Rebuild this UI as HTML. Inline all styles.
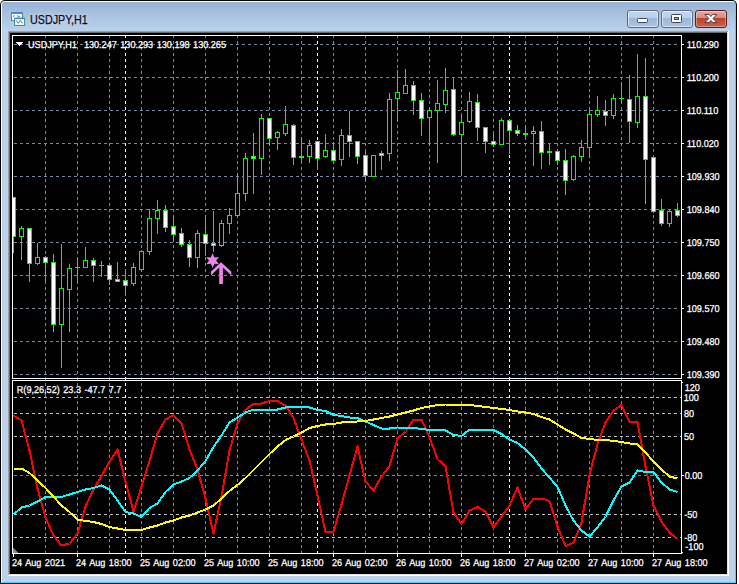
<!DOCTYPE html>
<html><head><meta charset="utf-8"><title>USDJPY,H1</title>
<style>
html,body{margin:0;padding:0;background:#fff;}
body{width:739px;height:584px;position:relative;overflow:hidden;font-family:"Liberation Sans",sans-serif;}
.abs{position:absolute;}
.t{position:absolute;height:20px;line-height:20px;font-size:9.1px;color:#fff;white-space:pre;word-spacing:1px;-webkit-text-stroke:0.25px #fff;text-rendering:geometricPrecision;transform-origin:0 13.1px;transform:scaleY(1.1);}
#w0{left:0;top:0;width:737px;height:584px;background:#000;border-radius:5px 5px 0 0;}
#w1{left:1px;top:1px;width:735px;height:582px;box-sizing:border-box;border-top:1px solid #fff;border-left:1px solid #fff;border-right:1px solid #3fd3ff;border-bottom:1px solid #3fd3ff;background:#bbd2ea;border-radius:4px 4px 0 0;}
#cap{left:2px;top:2px;width:733px;height:29px;background:linear-gradient(#98b4d4,#bbd3ec);border-radius:3px 3px 0 0;}
#title{left:30.1px;top:10px;height:20px;line-height:20px;font-size:12.5px;color:#0a0a28;white-space:pre;transform-origin:0 0;transform:scaleX(0.858);-webkit-text-stroke:0.25px #0a0a28;text-shadow:0 0 5px rgba(255,255,255,.7);}
.btn{top:10px;width:32px;height:18px;box-sizing:border-box;border:1px solid #5d6b86;border-radius:3px;background:linear-gradient(#c4d7ee 0,#b9cfe9 45%,#9cb9d9 46%,#a9c4e2 100%);box-shadow:inset 0 0 0 1px rgba(255,255,255,.55);}
#bclose{border-color:#5a1c22;background:linear-gradient(#e3ac9e 0,#d48b7b 45%,#bd4128 46%,#cb6248 100%);box-shadow:inset 0 0 0 1px rgba(255,255,255,.35);}
</style></head><body>
<div id="w0" class="abs"></div>
<div id="w1" class="abs"></div>
<div id="cap" class="abs"></div>
<!-- client sunken edge -->
<div class="abs" style="left:8px;top:31px;width:721px;height:545px;background:#fff;"></div>
<div class="abs" style="left:8px;top:31px;width:720px;height:544px;background:#a0a0a0;"></div>
<div class="abs" style="left:9px;top:32px;width:719px;height:543px;background:#e3e3e3;"></div>
<div class="abs" style="left:9px;top:32px;width:718px;height:542px;background:#696969;"></div>
<div class="abs" style="left:10px;top:33px;width:717px;height:541px;background:#000;"></div>
<!-- title icon -->
<svg class="abs" style="left:9px;top:10px" width="20" height="18" viewBox="9 10 20 18">
<rect x="11" y="12" width="12" height="9" rx="0.8" fill="#4a86ee"/>
<rect x="12" y="14" width="10" height="6" fill="#fffef6"/>
<path d="M13.2 16.6 L14.6 15.4 M17.2 15.4 L18.6 16.8 L20 16.8" stroke="#4a80f0" stroke-width="1.1" fill="none"/>
<path d="M11.5 12.5 H22.5 M11.5 12.5 V20.5 M22.5 12.5 V18" stroke="#3c8a6e" stroke-opacity=".75" stroke-dasharray="1 1" stroke-dashoffset="1" fill="none" shape-rendering="crispEdges"/>
<rect x="14" y="17.4" width="11.1" height="8.6" rx="0.8" fill="#4a86ee"/>
<rect x="15" y="19.2" width="9.1" height="5.7" fill="#fffef6"/>
<path d="M14.5 18.5 H24.5 M14.5 18.5 V25.5 M24.5 18.5 V25.5 M14.5 25.5 H24.5" stroke="#3c8a6e" stroke-opacity=".75" stroke-dasharray="1 1" stroke-dashoffset="1" fill="none" shape-rendering="crispEdges"/>
<path d="M16.2 20.3 L18.2 23.3 L20.1 20.3 L22.4 23.4" stroke="#4a80f0" stroke-width="1" fill="none"/>
</svg>
<div id="title" class="abs">USDJPY,H1</div>
<div class="abs btn" style="left:627px"></div>
<div class="abs btn" style="left:661px"></div>
<div id="bclose" class="abs btn" style="left:695px"></div>
<!-- button glyphs -->
<svg class="abs" style="left:627px;top:10px" width="100" height="18" viewBox="0 0 100 18">
<rect x="10.5" y="8.5" width="10" height="4" rx="1" fill="#fff" stroke="#3e4560"/>
<rect x="44.5" y="4.5" width="10" height="8" rx="1" fill="#fff" stroke="#3e4560"/>
<rect x="47.5" y="7.5" width="4" height="2" fill="#8fb0d8" stroke="#3e4560"/>
<path d="M77.9 4.4 h4.1 l1.9 2.1 l1.9 -2.1 h4.1 l-3.9 4.1 l3.9 4.1 h-4.1 l-1.9 -2.1 l-1.9 2.1 h-4.1 l3.9 -4.1 z" fill="#fff" stroke="#51394a" stroke-width="1" stroke-linejoin="round"/>
</svg>
<svg width="739" height="584" viewBox="0 0 739 584" style="position:absolute;left:0;top:0" shape-rendering="crispEdges">
<defs><clipPath id="cm"><rect x="13" y="36" width="668" height="342"/></clipPath><clipPath id="cs"><rect x="13" y="381" width="668" height="172"/></clipPath></defs>
<g stroke="#778899" stroke-width="1" stroke-dasharray="3 3" fill="none">
<line x1="14" y1="44.5" x2="677" y2="44.5"/>
<line x1="14" y1="77.5" x2="677" y2="77.5"/>
<line x1="14" y1="110.5" x2="677" y2="110.5"/>
<line x1="14" y1="143.5" x2="677" y2="143.5"/>
<line x1="14" y1="176.5" x2="677" y2="176.5"/>
<line x1="14" y1="209.5" x2="677" y2="209.5"/>
<line x1="14" y1="242.5" x2="677" y2="242.5"/>
<line x1="14" y1="275.5" x2="677" y2="275.5"/>
<line x1="14" y1="308.5" x2="677" y2="308.5"/>
<line x1="14" y1="341.5" x2="677" y2="341.5"/>
<line x1="14" y1="374.5" x2="677" y2="374.5"/>
<line x1="45.5" y1="35" x2="45.5" y2="553"/>
<line x1="77.5" y1="35" x2="77.5" y2="553"/>
<line x1="109.5" y1="35" x2="109.5" y2="553"/>
<line x1="141.5" y1="35" x2="141.5" y2="553"/>
<line x1="173.5" y1="35" x2="173.5" y2="553"/>
<line x1="205.5" y1="35" x2="205.5" y2="553"/>
<line x1="237.5" y1="35" x2="237.5" y2="553"/>
<line x1="269.5" y1="35" x2="269.5" y2="553"/>
<line x1="301.5" y1="35" x2="301.5" y2="553"/>
<line x1="333.5" y1="35" x2="333.5" y2="553"/>
<line x1="365.5" y1="35" x2="365.5" y2="553"/>
<line x1="397.5" y1="35" x2="397.5" y2="553"/>
<line x1="429.5" y1="35" x2="429.5" y2="553"/>
<line x1="461.5" y1="35" x2="461.5" y2="553"/>
<line x1="493.5" y1="35" x2="493.5" y2="553"/>
<line x1="525.5" y1="35" x2="525.5" y2="553"/>
<line x1="557.5" y1="35" x2="557.5" y2="553"/>
<line x1="589.5" y1="35" x2="589.5" y2="553"/>
<line x1="621.5" y1="35" x2="621.5" y2="553"/>
<line x1="653.5" y1="35" x2="653.5" y2="553"/>
<line x1="14" y1="475.5" x2="677" y2="475.5"/>
</g>
<g stroke="#ffffff" stroke-width="1" stroke-dasharray="3 3" fill="none">
<line x1="125.5" y1="35" x2="125.5" y2="553"/>
<line x1="317.5" y1="35" x2="317.5" y2="553"/>
<line x1="509.5" y1="35" x2="509.5" y2="553"/>
</g>
<g stroke="#c0c0c0" stroke-width="1" stroke-dasharray="3 3" fill="none">
<line x1="14" y1="397.5" x2="681" y2="397.5"/>
<line x1="14" y1="413.5" x2="681" y2="413.5"/>
<line x1="14" y1="436.5" x2="681" y2="436.5"/>
<line x1="14" y1="514.5" x2="681" y2="514.5"/>
<line x1="14" y1="537.5" x2="681" y2="537.5"/>
</g>
<g clip-path="url(#cm)">
<rect x="13" y="197" width="1" height="56" fill="#00ff00"/>
<rect x="11" y="197" width="5" height="40" fill="#00ff00"/>
<rect x="12" y="198" width="3" height="38" fill="#ffffff"/>
<rect x="21" y="226" width="1" height="34" fill="#00ff00"/>
<rect x="19" y="228" width="5" height="9" fill="#00ff00"/>
<rect x="20" y="229" width="3" height="7" fill="#000000"/>
<rect x="29" y="228" width="1" height="54" fill="#00ff00"/>
<rect x="27" y="228" width="5" height="36" fill="#00ff00"/>
<rect x="28" y="229" width="3" height="34" fill="#ffffff"/>
<rect x="37" y="243" width="1" height="22" fill="#00ff00"/>
<rect x="35" y="257" width="5" height="7" fill="#00ff00"/>
<rect x="36" y="258" width="3" height="5" fill="#000000"/>
<rect x="45" y="256" width="1" height="25" fill="#00ff00"/>
<rect x="43" y="257" width="5" height="6" fill="#00ff00"/>
<rect x="44" y="258" width="3" height="4" fill="#ffffff"/>
<rect x="53" y="254" width="1" height="78" fill="#00ff00"/>
<rect x="51" y="262" width="5" height="63" fill="#00ff00"/>
<rect x="52" y="263" width="3" height="61" fill="#ffffff"/>
<rect x="61" y="244" width="1" height="124" fill="#00ff00"/>
<rect x="59" y="288" width="5" height="37" fill="#00ff00"/>
<rect x="60" y="289" width="3" height="35" fill="#000000"/>
<rect x="69" y="264" width="1" height="68" fill="#00ff00"/>
<rect x="67" y="268" width="5" height="22" fill="#00ff00"/>
<rect x="68" y="269" width="3" height="20" fill="#000000"/>
<rect x="77" y="257" width="1" height="26" fill="#00ff00"/>
<rect x="75" y="267" width="5" height="1" fill="#00ff00"/>
<rect x="85" y="247" width="1" height="21" fill="#00ff00"/>
<rect x="83" y="260" width="5" height="8" fill="#00ff00"/>
<rect x="84" y="261" width="3" height="6" fill="#000000"/>
<rect x="93" y="258" width="1" height="24" fill="#00ff00"/>
<rect x="91" y="260" width="5" height="6" fill="#00ff00"/>
<rect x="92" y="261" width="3" height="4" fill="#ffffff"/>
<rect x="101" y="261" width="1" height="16" fill="#00ff00"/>
<rect x="99" y="265" width="5" height="1" fill="#00ff00"/>
<rect x="109" y="263" width="1" height="22" fill="#00ff00"/>
<rect x="107" y="265" width="5" height="15" fill="#00ff00"/>
<rect x="108" y="266" width="3" height="13" fill="#ffffff"/>
<rect x="117" y="262" width="1" height="20" fill="#00ff00"/>
<rect x="115" y="279" width="5" height="3" fill="#00ff00"/>
<rect x="116" y="280" width="3" height="1" fill="#ffffff"/>
<rect x="125" y="269" width="1" height="27" fill="#00ff00"/>
<rect x="123" y="280" width="5" height="6" fill="#00ff00"/>
<rect x="124" y="281" width="3" height="4" fill="#ffffff"/>
<rect x="133" y="263" width="1" height="23" fill="#00ff00"/>
<rect x="131" y="267" width="5" height="17" fill="#00ff00"/>
<rect x="132" y="268" width="3" height="15" fill="#000000"/>
<rect x="141" y="250" width="1" height="21" fill="#00ff00"/>
<rect x="139" y="251" width="5" height="19" fill="#00ff00"/>
<rect x="140" y="252" width="3" height="17" fill="#000000"/>
<rect x="149" y="209" width="1" height="46" fill="#00ff00"/>
<rect x="147" y="218" width="5" height="34" fill="#00ff00"/>
<rect x="148" y="219" width="3" height="32" fill="#000000"/>
<rect x="157" y="200" width="1" height="34" fill="#00ff00"/>
<rect x="155" y="210" width="5" height="9" fill="#00ff00"/>
<rect x="156" y="211" width="3" height="7" fill="#000000"/>
<rect x="165" y="205" width="1" height="27" fill="#00ff00"/>
<rect x="163" y="210" width="5" height="18" fill="#00ff00"/>
<rect x="164" y="211" width="3" height="16" fill="#ffffff"/>
<rect x="173" y="217" width="1" height="25" fill="#00ff00"/>
<rect x="171" y="226" width="5" height="9" fill="#00ff00"/>
<rect x="172" y="227" width="3" height="7" fill="#ffffff"/>
<rect x="181" y="228" width="1" height="19" fill="#00ff00"/>
<rect x="179" y="233" width="5" height="12" fill="#00ff00"/>
<rect x="180" y="234" width="3" height="10" fill="#ffffff"/>
<rect x="189" y="240" width="1" height="27" fill="#00ff00"/>
<rect x="187" y="244" width="5" height="14" fill="#00ff00"/>
<rect x="188" y="245" width="3" height="12" fill="#ffffff"/>
<rect x="197" y="230" width="1" height="38" fill="#00ff00"/>
<rect x="195" y="233" width="5" height="25" fill="#00ff00"/>
<rect x="196" y="234" width="3" height="23" fill="#000000"/>
<rect x="205" y="215" width="1" height="41" fill="#00ff00"/>
<rect x="203" y="234" width="5" height="10" fill="#00ff00"/>
<rect x="204" y="235" width="3" height="8" fill="#ffffff"/>
<rect x="213" y="211" width="1" height="41" fill="#00ff00"/>
<rect x="211" y="243" width="5" height="3" fill="#00ff00"/>
<rect x="212" y="244" width="3" height="1" fill="#ffffff"/>
<rect x="221" y="220" width="1" height="27" fill="#00ff00"/>
<rect x="219" y="223" width="5" height="23" fill="#00ff00"/>
<rect x="220" y="224" width="3" height="21" fill="#000000"/>
<rect x="229" y="208" width="1" height="26" fill="#00ff00"/>
<rect x="227" y="215" width="5" height="9" fill="#00ff00"/>
<rect x="228" y="216" width="3" height="7" fill="#000000"/>
<rect x="237" y="174" width="1" height="42" fill="#00ff00"/>
<rect x="235" y="193" width="5" height="23" fill="#00ff00"/>
<rect x="236" y="194" width="3" height="21" fill="#000000"/>
<rect x="245" y="153" width="1" height="48" fill="#00ff00"/>
<rect x="243" y="158" width="5" height="36" fill="#00ff00"/>
<rect x="244" y="159" width="3" height="34" fill="#000000"/>
<rect x="253" y="133" width="1" height="61" fill="#00ff00"/>
<rect x="251" y="156" width="5" height="3" fill="#00ff00"/>
<rect x="252" y="157" width="3" height="1" fill="#ffffff"/>
<rect x="261" y="114" width="1" height="61" fill="#00ff00"/>
<rect x="259" y="118" width="5" height="41" fill="#00ff00"/>
<rect x="260" y="119" width="3" height="39" fill="#000000"/>
<rect x="269" y="118" width="1" height="28" fill="#00ff00"/>
<rect x="267" y="118" width="5" height="21" fill="#00ff00"/>
<rect x="268" y="119" width="3" height="19" fill="#ffffff"/>
<rect x="277" y="131" width="1" height="19" fill="#00ff00"/>
<rect x="275" y="132" width="5" height="6" fill="#00ff00"/>
<rect x="276" y="133" width="3" height="4" fill="#000000"/>
<rect x="285" y="106" width="1" height="30" fill="#00ff00"/>
<rect x="283" y="124" width="5" height="10" fill="#00ff00"/>
<rect x="284" y="125" width="3" height="8" fill="#000000"/>
<rect x="293" y="124" width="1" height="41" fill="#00ff00"/>
<rect x="291" y="125" width="5" height="33" fill="#00ff00"/>
<rect x="292" y="126" width="3" height="31" fill="#ffffff"/>
<rect x="301" y="137" width="1" height="26" fill="#00ff00"/>
<rect x="299" y="156" width="5" height="2" fill="#00ff00"/>
<rect x="309" y="140" width="1" height="23" fill="#00ff00"/>
<rect x="307" y="145" width="5" height="12" fill="#00ff00"/>
<rect x="308" y="146" width="3" height="10" fill="#000000"/>
<rect x="317" y="141" width="1" height="29" fill="#00ff00"/>
<rect x="315" y="141" width="5" height="18" fill="#00ff00"/>
<rect x="316" y="142" width="3" height="16" fill="#ffffff"/>
<rect x="325" y="134" width="1" height="24" fill="#00ff00"/>
<rect x="323" y="150" width="5" height="7" fill="#00ff00"/>
<rect x="324" y="151" width="3" height="5" fill="#000000"/>
<rect x="333" y="142" width="1" height="20" fill="#00ff00"/>
<rect x="331" y="150" width="5" height="11" fill="#00ff00"/>
<rect x="332" y="151" width="3" height="9" fill="#ffffff"/>
<rect x="341" y="129" width="1" height="37" fill="#00ff00"/>
<rect x="339" y="135" width="5" height="25" fill="#00ff00"/>
<rect x="340" y="136" width="3" height="23" fill="#000000"/>
<rect x="349" y="111" width="1" height="46" fill="#00ff00"/>
<rect x="347" y="135" width="5" height="7" fill="#00ff00"/>
<rect x="348" y="136" width="3" height="5" fill="#ffffff"/>
<rect x="357" y="141" width="1" height="23" fill="#00ff00"/>
<rect x="355" y="141" width="5" height="16" fill="#00ff00"/>
<rect x="356" y="142" width="3" height="14" fill="#ffffff"/>
<rect x="365" y="151" width="1" height="30" fill="#00ff00"/>
<rect x="363" y="155" width="5" height="21" fill="#00ff00"/>
<rect x="364" y="156" width="3" height="19" fill="#ffffff"/>
<rect x="373" y="155" width="1" height="22" fill="#00ff00"/>
<rect x="371" y="155" width="5" height="22" fill="#00ff00"/>
<rect x="372" y="156" width="3" height="20" fill="#000000"/>
<rect x="381" y="151" width="1" height="19" fill="#00ff00"/>
<rect x="379" y="153" width="5" height="3" fill="#00ff00"/>
<rect x="380" y="154" width="3" height="1" fill="#ffffff"/>
<rect x="389" y="93" width="1" height="68" fill="#00ff00"/>
<rect x="387" y="99" width="5" height="55" fill="#00ff00"/>
<rect x="388" y="100" width="3" height="53" fill="#000000"/>
<rect x="397" y="70" width="1" height="51" fill="#00ff00"/>
<rect x="395" y="92" width="5" height="7" fill="#00ff00"/>
<rect x="396" y="93" width="3" height="5" fill="#000000"/>
<rect x="405" y="69" width="1" height="25" fill="#00ff00"/>
<rect x="403" y="85" width="5" height="9" fill="#00ff00"/>
<rect x="404" y="86" width="3" height="7" fill="#000000"/>
<rect x="413" y="81" width="1" height="34" fill="#00ff00"/>
<rect x="411" y="85" width="5" height="16" fill="#00ff00"/>
<rect x="412" y="86" width="3" height="14" fill="#ffffff"/>
<rect x="421" y="93" width="1" height="43" fill="#00ff00"/>
<rect x="419" y="100" width="5" height="19" fill="#00ff00"/>
<rect x="420" y="101" width="3" height="17" fill="#ffffff"/>
<rect x="429" y="107" width="1" height="39" fill="#00ff00"/>
<rect x="427" y="110" width="5" height="8" fill="#00ff00"/>
<rect x="428" y="111" width="3" height="6" fill="#000000"/>
<rect x="437" y="80" width="1" height="83" fill="#00ff00"/>
<rect x="435" y="103" width="5" height="8" fill="#00ff00"/>
<rect x="436" y="104" width="3" height="6" fill="#000000"/>
<rect x="445" y="68" width="1" height="45" fill="#00ff00"/>
<rect x="443" y="90" width="5" height="15" fill="#00ff00"/>
<rect x="444" y="91" width="3" height="13" fill="#000000"/>
<rect x="453" y="78" width="1" height="58" fill="#00ff00"/>
<rect x="451" y="89" width="5" height="46" fill="#00ff00"/>
<rect x="452" y="90" width="3" height="44" fill="#ffffff"/>
<rect x="461" y="115" width="1" height="61" fill="#00ff00"/>
<rect x="459" y="122" width="5" height="13" fill="#00ff00"/>
<rect x="460" y="123" width="3" height="11" fill="#000000"/>
<rect x="469" y="92" width="1" height="31" fill="#00ff00"/>
<rect x="467" y="101" width="5" height="21" fill="#00ff00"/>
<rect x="468" y="102" width="3" height="19" fill="#000000"/>
<rect x="477" y="94" width="1" height="47" fill="#00ff00"/>
<rect x="475" y="102" width="5" height="26" fill="#00ff00"/>
<rect x="476" y="103" width="3" height="24" fill="#ffffff"/>
<rect x="485" y="127" width="1" height="26" fill="#00ff00"/>
<rect x="483" y="127" width="5" height="15" fill="#00ff00"/>
<rect x="484" y="128" width="3" height="13" fill="#ffffff"/>
<rect x="493" y="134" width="1" height="13" fill="#00ff00"/>
<rect x="491" y="141" width="5" height="4" fill="#00ff00"/>
<rect x="492" y="142" width="3" height="2" fill="#ffffff"/>
<rect x="501" y="118" width="1" height="27" fill="#00ff00"/>
<rect x="499" y="120" width="5" height="25" fill="#00ff00"/>
<rect x="500" y="121" width="3" height="23" fill="#000000"/>
<rect x="509" y="119" width="1" height="35" fill="#00ff00"/>
<rect x="507" y="120" width="5" height="11" fill="#00ff00"/>
<rect x="508" y="121" width="3" height="9" fill="#ffffff"/>
<rect x="517" y="125" width="1" height="11" fill="#00ff00"/>
<rect x="515" y="130" width="5" height="4" fill="#00ff00"/>
<rect x="516" y="131" width="3" height="2" fill="#ffffff"/>
<rect x="525" y="126" width="1" height="13" fill="#00ff00"/>
<rect x="523" y="133" width="5" height="2" fill="#00ff00"/>
<rect x="533" y="126" width="1" height="40" fill="#00ff00"/>
<rect x="531" y="131" width="5" height="3" fill="#00ff00"/>
<rect x="532" y="132" width="3" height="1" fill="#000000"/>
<rect x="541" y="121" width="1" height="48" fill="#00ff00"/>
<rect x="539" y="131" width="5" height="22" fill="#00ff00"/>
<rect x="540" y="132" width="3" height="20" fill="#ffffff"/>
<rect x="549" y="144" width="1" height="21" fill="#00ff00"/>
<rect x="547" y="151" width="5" height="2" fill="#00ff00"/>
<rect x="557" y="149" width="1" height="16" fill="#00ff00"/>
<rect x="555" y="151" width="5" height="10" fill="#00ff00"/>
<rect x="556" y="152" width="3" height="8" fill="#ffffff"/>
<rect x="565" y="149" width="1" height="46" fill="#00ff00"/>
<rect x="563" y="160" width="5" height="21" fill="#00ff00"/>
<rect x="564" y="161" width="3" height="19" fill="#ffffff"/>
<rect x="573" y="155" width="1" height="26" fill="#00ff00"/>
<rect x="571" y="156" width="5" height="24" fill="#00ff00"/>
<rect x="572" y="157" width="3" height="22" fill="#000000"/>
<rect x="581" y="140" width="1" height="22" fill="#00ff00"/>
<rect x="579" y="147" width="5" height="10" fill="#00ff00"/>
<rect x="580" y="148" width="3" height="8" fill="#000000"/>
<rect x="589" y="108" width="1" height="50" fill="#00ff00"/>
<rect x="587" y="114" width="5" height="34" fill="#00ff00"/>
<rect x="588" y="115" width="3" height="32" fill="#000000"/>
<rect x="597" y="96" width="1" height="21" fill="#00ff00"/>
<rect x="595" y="110" width="5" height="5" fill="#00ff00"/>
<rect x="596" y="111" width="3" height="3" fill="#000000"/>
<rect x="605" y="100" width="1" height="26" fill="#00ff00"/>
<rect x="603" y="111" width="5" height="5" fill="#00ff00"/>
<rect x="604" y="112" width="3" height="3" fill="#ffffff"/>
<rect x="613" y="94" width="1" height="25" fill="#00ff00"/>
<rect x="611" y="98" width="5" height="18" fill="#00ff00"/>
<rect x="612" y="99" width="3" height="16" fill="#000000"/>
<rect x="621" y="82" width="1" height="21" fill="#00ff00"/>
<rect x="619" y="98" width="5" height="1" fill="#00ff00"/>
<rect x="629" y="75" width="1" height="68" fill="#00ff00"/>
<rect x="627" y="99" width="5" height="23" fill="#00ff00"/>
<rect x="628" y="100" width="3" height="21" fill="#ffffff"/>
<rect x="637" y="54" width="1" height="74" fill="#00ff00"/>
<rect x="635" y="96" width="5" height="27" fill="#00ff00"/>
<rect x="636" y="97" width="3" height="25" fill="#000000"/>
<rect x="645" y="58" width="1" height="146" fill="#00ff00"/>
<rect x="643" y="96" width="5" height="64" fill="#00ff00"/>
<rect x="644" y="97" width="3" height="62" fill="#ffffff"/>
<rect x="653" y="157" width="1" height="56" fill="#00ff00"/>
<rect x="651" y="157" width="5" height="55" fill="#00ff00"/>
<rect x="652" y="158" width="3" height="53" fill="#ffffff"/>
<rect x="661" y="199" width="1" height="27" fill="#00ff00"/>
<rect x="659" y="210" width="5" height="14" fill="#00ff00"/>
<rect x="660" y="211" width="3" height="12" fill="#ffffff"/>
<rect x="669" y="210" width="1" height="17" fill="#00ff00"/>
<rect x="667" y="211" width="5" height="13" fill="#00ff00"/>
<rect x="668" y="212" width="3" height="11" fill="#000000"/>
<rect x="677" y="203" width="1" height="14" fill="#00ff00"/>
<rect x="675" y="210" width="5" height="6" fill="#00ff00"/>
<rect x="676" y="211" width="3" height="4" fill="#ffffff"/>
</g>
<polygon points="212.60,253.30 214.40,257.48 218.92,256.95 216.20,260.60 218.92,264.25 214.40,263.72 212.60,267.90 210.80,263.72 206.28,264.25 209.00,260.60 206.28,256.95 210.80,257.48" fill="#ee82ee" shape-rendering="geometricPrecision"/>
<polygon points="221,262.2 231.3,271.4 231.3,275.6 222.9,267.4 222.9,283.9 219.2,283.9 219.2,267.4 211,275.6 211,271.4" fill="#ee82ee" shape-rendering="geometricPrecision"/>
<polyline points="13.5,415.5 21.5,420.5 29.5,450.5 37.5,488.5 45.5,517.5 53.5,535.5 61.5,545.5 69.5,543.5 77.5,533.5 85.5,506.5 93.5,489.5 101.5,476.0 109.5,461.5 117.5,449.5 125.5,481.5 133.5,511.5 141.5,486.5 149.5,461.0 157.5,433.5 165.5,419.5 173.5,415.0 181.5,423.5 189.5,449.5 197.5,469.5 205.5,498.5 213.5,533.5 221.5,496.5 229.5,450.5 237.5,423.5 245.5,410.0 253.5,403.5 261.5,403.5 269.5,401.0 277.5,401.0 285.5,405.5 293.5,418.0 301.5,439.5 309.5,460.5 317.5,495.5 325.5,532.0 333.5,532.0 341.5,504.5 349.5,475.5 357.5,446.5 365.5,481.5 373.5,490.5 381.5,476.5 389.5,466.0 397.5,438.5 405.5,431.5 413.5,419.5 421.5,419.5 429.5,437.5 437.5,459.0 445.5,466.5 453.5,512.5 461.5,524.0 469.5,510.5 477.5,507.0 485.5,511.5 493.5,527.5 501.5,516.5 509.5,505.5 517.5,487.5 525.5,509.5 533.5,498.5 541.5,498.5 549.5,501.0 557.5,526.5 565.5,546.0 573.5,543.0 581.5,522.5 589.5,475.0 597.5,444.0 605.5,422.5 613.5,410.5 621.5,405.0 629.5,422.0 637.5,422.0 645.5,466.5 653.5,505.5 661.5,521.5 669.5,532.5 677.5,539.0" fill="none" stroke="#ff0000" stroke-width="2" stroke-linejoin="round" stroke-linecap="butt" clip-path="url(#cs)"/>
<polyline points="13.5,514.5 21.5,507.5 29.5,505.5 37.5,501.5 45.5,497.0 53.5,497.0 61.5,497.0 69.5,494.5 77.5,492.0 85.5,489.5 93.5,488.0 101.5,485.5 109.5,489.5 117.5,500.5 125.5,512.0 133.5,513.5 141.5,517.0 149.5,508.0 157.5,503.5 165.5,492.0 173.5,484.5 181.5,481.5 189.5,478.0 197.5,470.5 205.5,461.0 213.5,447.0 221.5,435.5 229.5,422.5 237.5,417.5 245.5,412.5 253.5,409.5 261.5,409.5 269.5,409.5 277.5,409.5 285.5,407.5 293.5,407.0 301.5,407.0 309.5,407.5 317.5,410.0 325.5,411.0 333.5,415.0 341.5,416.0 349.5,417.5 357.5,418.0 365.5,421.5 373.5,425.0 381.5,428.5 389.5,428.5 397.5,427.5 405.5,427.5 413.5,428.0 421.5,429.0 429.5,430.0 437.5,430.0 445.5,430.5 453.5,435.0 461.5,436.0 469.5,429.5 477.5,429.5 485.5,430.0 493.5,430.0 501.5,434.0 509.5,439.5 517.5,443.0 525.5,449.5 533.5,457.5 541.5,468.5 549.5,477.5 557.5,487.0 565.5,505.5 573.5,520.5 581.5,530.5 589.5,536.5 597.5,527.5 605.5,516.5 613.5,500.5 621.5,486.5 629.5,482.5 637.5,470.5 645.5,472.0 653.5,472.0 661.5,482.5 669.5,489.5 677.5,492.0" fill="none" stroke="#00ffff" stroke-width="2" stroke-linejoin="round" stroke-linecap="butt" clip-path="url(#cs)"/>
<polyline points="13.5,468.5 21.5,468.5 29.5,473.0 37.5,480.5 45.5,488.0 53.5,496.5 61.5,505.5 69.5,512.0 77.5,519.5 85.5,521.0 93.5,522.0 101.5,524.0 109.5,527.0 117.5,528.5 125.5,530.0 133.5,530.0 141.5,530.0 149.5,527.5 157.5,525.5 165.5,522.5 173.5,520.5 181.5,517.5 189.5,515.5 197.5,512.5 205.5,509.5 213.5,505.5 221.5,498.5 229.5,491.0 237.5,485.0 245.5,478.0 253.5,470.0 261.5,462.0 269.5,454.0 277.5,446.5 285.5,440.0 293.5,436.5 301.5,432.5 309.5,428.0 317.5,426.0 325.5,424.5 333.5,424.0 341.5,422.5 349.5,422.0 357.5,421.5 365.5,421.0 373.5,419.5 381.5,418.0 389.5,416.5 397.5,414.5 405.5,412.5 413.5,410.5 421.5,408.0 429.5,406.5 437.5,405.0 445.5,404.5 453.5,404.5 461.5,404.5 469.5,405.0 477.5,406.0 485.5,407.0 493.5,408.0 501.5,409.0 509.5,410.0 517.5,411.5 525.5,412.5 533.5,414.0 541.5,417.0 549.5,419.5 557.5,424.5 565.5,429.5 573.5,433.5 581.5,438.0 589.5,439.0 597.5,440.0 605.5,440.0 613.5,441.0 621.5,442.0 629.5,443.5 637.5,444.5 645.5,452.5 653.5,461.5 661.5,469.5 669.5,476.5 677.5,478.5" fill="none" stroke="#ffff00" stroke-width="2" stroke-linejoin="round" stroke-linecap="butt" clip-path="url(#cs)"/>
<g fill="none" stroke="#ffffff" stroke-width="1">
<rect x="12.5" y="35.5" width="669" height="343"/>
<rect x="12.5" y="380.5" width="669" height="173"/>
</g>
<g fill="#ffffff">
<rect x="682" y="44" width="2" height="1"/>
<rect x="682" y="77" width="2" height="1"/>
<rect x="682" y="110" width="2" height="1"/>
<rect x="682" y="143" width="2" height="1"/>
<rect x="682" y="176" width="2" height="1"/>
<rect x="682" y="209" width="2" height="1"/>
<rect x="682" y="242" width="2" height="1"/>
<rect x="682" y="275" width="2" height="1"/>
<rect x="682" y="308" width="2" height="1"/>
<rect x="682" y="341" width="2" height="1"/>
<rect x="682" y="374" width="2" height="1"/>
<rect x="682" y="382" width="1" height="1"/>
<rect x="682" y="475" width="2" height="1"/>
<rect x="682" y="552" width="1" height="1"/>
<rect x="13" y="554" width="1" height="3"/>
<rect x="77" y="554" width="1" height="3"/>
<rect x="141" y="554" width="1" height="3"/>
<rect x="205" y="554" width="1" height="3"/>
<rect x="269" y="554" width="1" height="3"/>
<rect x="333" y="554" width="1" height="3"/>
<rect x="397" y="554" width="1" height="3"/>
<rect x="461" y="554" width="1" height="3"/>
<rect x="525" y="554" width="1" height="3"/>
<rect x="589" y="554" width="1" height="3"/>
<rect x="653" y="554" width="1" height="3"/>
<rect x="16" y="42" width="7" height="1"/><rect x="17" y="43" width="5" height="1"/><rect x="18" y="44" width="3" height="1"/><rect x="19" y="45" width="1" height="1"/>
</g>
<polygon points="13,548 13,553 18,553" fill="#778899"/>
</svg>
<div class="t" style="left:28px;top:34.90px;">USDJPY,H1&nbsp; 130.247 130.293 130.198 130.265</div>
<div class="t" style="left:16.8px;top:379.90px;">R(9,26,52) 23.3 -47.7 7.7</div>
<div class="t" style="left:686.7px;top:34.90px;">110.290</div>
<div class="t" style="left:686.7px;top:67.90px;">110.200</div>
<div class="t" style="left:686.7px;top:100.90px;">110.110</div>
<div class="t" style="left:686.7px;top:133.90px;">110.020</div>
<div class="t" style="left:686.7px;top:166.90px;">109.930</div>
<div class="t" style="left:686.7px;top:199.90px;">109.840</div>
<div class="t" style="left:686.7px;top:232.90px;">109.750</div>
<div class="t" style="left:686.7px;top:265.90px;">109.660</div>
<div class="t" style="left:686.7px;top:298.90px;">109.570</div>
<div class="t" style="left:686.7px;top:331.90px;">109.480</div>
<div class="t" style="left:686.7px;top:364.90px;">109.390</div>
<div class="t" style="left:684.7px;top:377.90px;">120</div>
<div class="t" style="left:683.7px;top:387.90px;">100</div>
<div class="t" style="left:683.9px;top:403.90px;">80</div>
<div class="t" style="left:683.9px;top:426.90px;">50</div>
<div class="t" style="left:684.7px;top:465.90px;">0.00</div>
<div class="t" style="left:684.2px;top:504.90px;">-50</div>
<div class="t" style="left:684.2px;top:527.90px;">-80</div>
<div class="t" style="left:685.3px;top:536.90px;">-100</div>
<div class="t" style="left:12px;top:552.90px;">24 Aug 2021</div>
<div class="t" style="left:76px;top:552.90px;">24 Aug 18:00</div>
<div class="t" style="left:140px;top:552.90px;">25 Aug 02:00</div>
<div class="t" style="left:204px;top:552.90px;">25 Aug 10:00</div>
<div class="t" style="left:268px;top:552.90px;">25 Aug 18:00</div>
<div class="t" style="left:332px;top:552.90px;">26 Aug 02:00</div>
<div class="t" style="left:396px;top:552.90px;">26 Aug 10:00</div>
<div class="t" style="left:460px;top:552.90px;">26 Aug 18:00</div>
<div class="t" style="left:524px;top:552.90px;">27 Aug 02:00</div>
<div class="t" style="left:588px;top:552.90px;">27 Aug 10:00</div>
<div class="t" style="left:652px;top:552.90px;">27 Aug 18:00</div>
</body></html>
